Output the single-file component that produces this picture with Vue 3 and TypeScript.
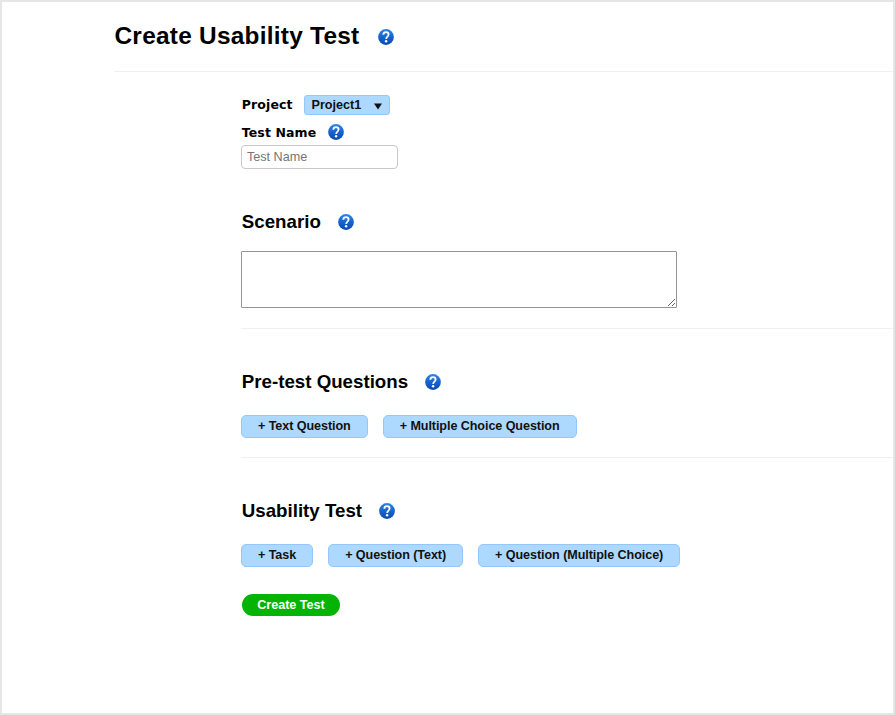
<script setup lang="ts">
import { defineComponent, h, ref } from 'vue'

const project = ref('Project1')
const testName = ref('')
const scenario = ref('')
const pretestActions: string[] = ['+ Text Question', '+ Multiple Choice Question']
const testActions: string[] = ['+ Task', '+ Question (Text)', '+ Question (Multiple Choice)']

const HelpIcon = defineComponent({
  props: { uid: { type: String, required: true } },
  setup(props) {
    return () =>
      h('svg', { width: 16, height: 16, viewBox: '0 0 16 16', role: 'img', 'aria-label': 'Help' }, [
        h('defs', [
          h('linearGradient', { id: props.uid, x1: 0, y1: 0, x2: 0, y2: 1 }, [
            h('stop', { offset: '0', 'stop-color': '#2f86e6' }),
            h('stop', { offset: '0.5', 'stop-color': '#1764cf' }),
            h('stop', { offset: '1', 'stop-color': '#0b49ae' }),
          ]),
        ]),
        h('circle', { cx: 8, cy: 8, r: 7.9, fill: `url(#${props.uid})` }),
        h('path', {
          d: 'M5.3 5.7C5.4 4 6.5 3.2 8 3.2s2.6.9 2.6 2.4c0 2-2.4 2.1-2.4 4.3',
          fill: 'none',
          stroke: '#fff',
          'stroke-width': 1.8,
        }),
        h('circle', { cx: 8.1, cy: 12.2, r: 1.2, fill: '#fff' }),
      ])
  },
})
</script>

<template>
  <main class="page">
    <header class="head">
      <h1>Create Usability Test</h1>
      <HelpIcon uid="help-page" />
    </header>

    <div class="body">
      <section class="basics">
        <div class="row project">
          <span class="label">Project</span>
          <button class="select" type="button">
            <span>{{ project }}</span>
            <svg width="8" height="7" viewBox="0 0 8 7"><path d="M0 .5h8L4 6.5z" fill="#111" /></svg>
          </button>
        </div>
        <div class="row name">
          <label class="label" for="test-name">Test Name</label>
          <HelpIcon uid="help-name" />
        </div>
        <input id="test-name" v-model="testName" class="input" placeholder="Test Name" />
      </section>

      <section class="scenario">
        <div class="title">
          <h2>Scenario</h2>
          <HelpIcon uid="help-scenario" />
        </div>
        <textarea v-model="scenario" class="area" aria-label="Scenario"></textarea>
      </section>

      <section class="pretest">
        <div class="title">
          <h2>Pre-test Questions</h2>
          <HelpIcon uid="help-pretest" />
        </div>
        <div class="actions">
          <button v-for="a in pretestActions" :key="a" class="btn" type="button">{{ a }}</button>
        </div>
      </section>

      <section class="tasks">
        <div class="title">
          <h2>Usability Test</h2>
          <HelpIcon uid="help-tasks" />
        </div>
        <div class="actions">
          <button v-for="a in testActions" :key="a" class="btn" type="button">{{ a }}</button>
        </div>
        <button class="create" type="button">Create Test</button>
      </section>
    </div>
  </main>
</template>

<style>
body {
  background: #fff;
}
</style>

<style scoped>
.page {
  box-sizing: border-box;
  width: 895px;
  height: 715px;
  border: 2px solid #e6e6e6;
  padding-left: 112px;
  overflow: hidden;
  background: #fff;
  color: #000;
  font-family: "Liberation Sans", Arial, sans-serif;
}
h1,
h2 {
  margin: 0;
  font-weight: 700;
  white-space: nowrap;
}
h1 {
  font-size: 24.4px;
  line-height: 28px;
  letter-spacing: 0.26px;
}
h2 {
  font-size: 18.72px;
  line-height: 22px;
}
.head {
  display: flex;
  box-sizing: border-box;
  align-items: center;
  gap: 19px;
  height: 70px;
  padding: 0 0 2px 0.5px;
  border-bottom: 1px solid #f0f0f0;
}
.head svg {
  margin-top: 2px;
}
.body {
  padding-left: 127px;
}
.row,
.title {
  display: flex;
  align-items: center;
  padding-left: 0.8px;
}
.project {
  height: 20px;
  gap: 11px;
}
.name {
  height: 16px;
  margin-top: 9px;
  gap: 12px;
}
.name .label {
  padding-top: 2px;
}
.basics {
  padding-top: 23px;
}
.label {
  font: 700 12.5px/16px "DejaVu Sans", Verdana, sans-serif;
  letter-spacing: 0.1px;
  white-space: nowrap;
}
.select {
  box-sizing: border-box;
  display: flex;
  align-items: center;
  justify-content: space-between;
  width: 86px;
  height: 20px;
  padding: 0 7px;
  border: 1px solid #94c6ff;
  border-radius: 3px;
  background: #add8ff;
  color: #111;
  font: 700 12.6px/16px "Liberation Sans", Arial, sans-serif;
}
.select svg {
  margin-top: 2px;
}
.input {
  display: block;
  box-sizing: border-box;
  width: 157px;
  height: 24px;
  margin-top: 5px;
  padding: 0 5px 1px;
  border: 1px solid #c8c8c8;
  border-radius: 4px;
  font: 12.6px "Liberation Sans", Arial, sans-serif;
}
.input::placeholder {
  color: #757575;
}
.title {
  gap: 17px;
  height: 22px;
}
.title svg {
  margin-bottom: 1px;
}
.scenario {
  height: 160px;
  box-sizing: border-box;
  padding-top: 42px;
  border-bottom: 1px solid #f0f0f0;
}
.area {
  display: block;
  box-sizing: border-box;
  width: 436px;
  height: 57px;
  margin-top: 18px;
  border: 1px solid #959595;
  border-radius: 1px;
  resize: both;
}
.pretest {
  box-sizing: border-box;
  height: 129px;
  padding-top: 42px;
  border-bottom: 1px solid #f0f0f0;
}
.tasks {
  padding-top: 42px;
}
.actions {
  display: flex;
  gap: 15px;
  margin-top: 22px;
}
.btn {
  box-sizing: border-box;
  height: 23px;
  padding: 0 16px 1px;
  border: 1px solid #94c6ff;
  border-radius: 5px;
  background: #add8ff;
  color: #111;
  font: 700 12.6px/16px "Liberation Sans", Arial, sans-serif;
  letter-spacing: -0.08px;
  white-space: nowrap;
}
.create {
  display: block;
  width: 98px;
  height: 22px;
  margin: 27px 0 0 1px;
  padding: 0;
  border: 0;
  border-radius: 11px;
  background: #04b404;
  color: #fff;
  font: 700 12.6px/16px "Liberation Sans", Arial, sans-serif;
}
</style>
